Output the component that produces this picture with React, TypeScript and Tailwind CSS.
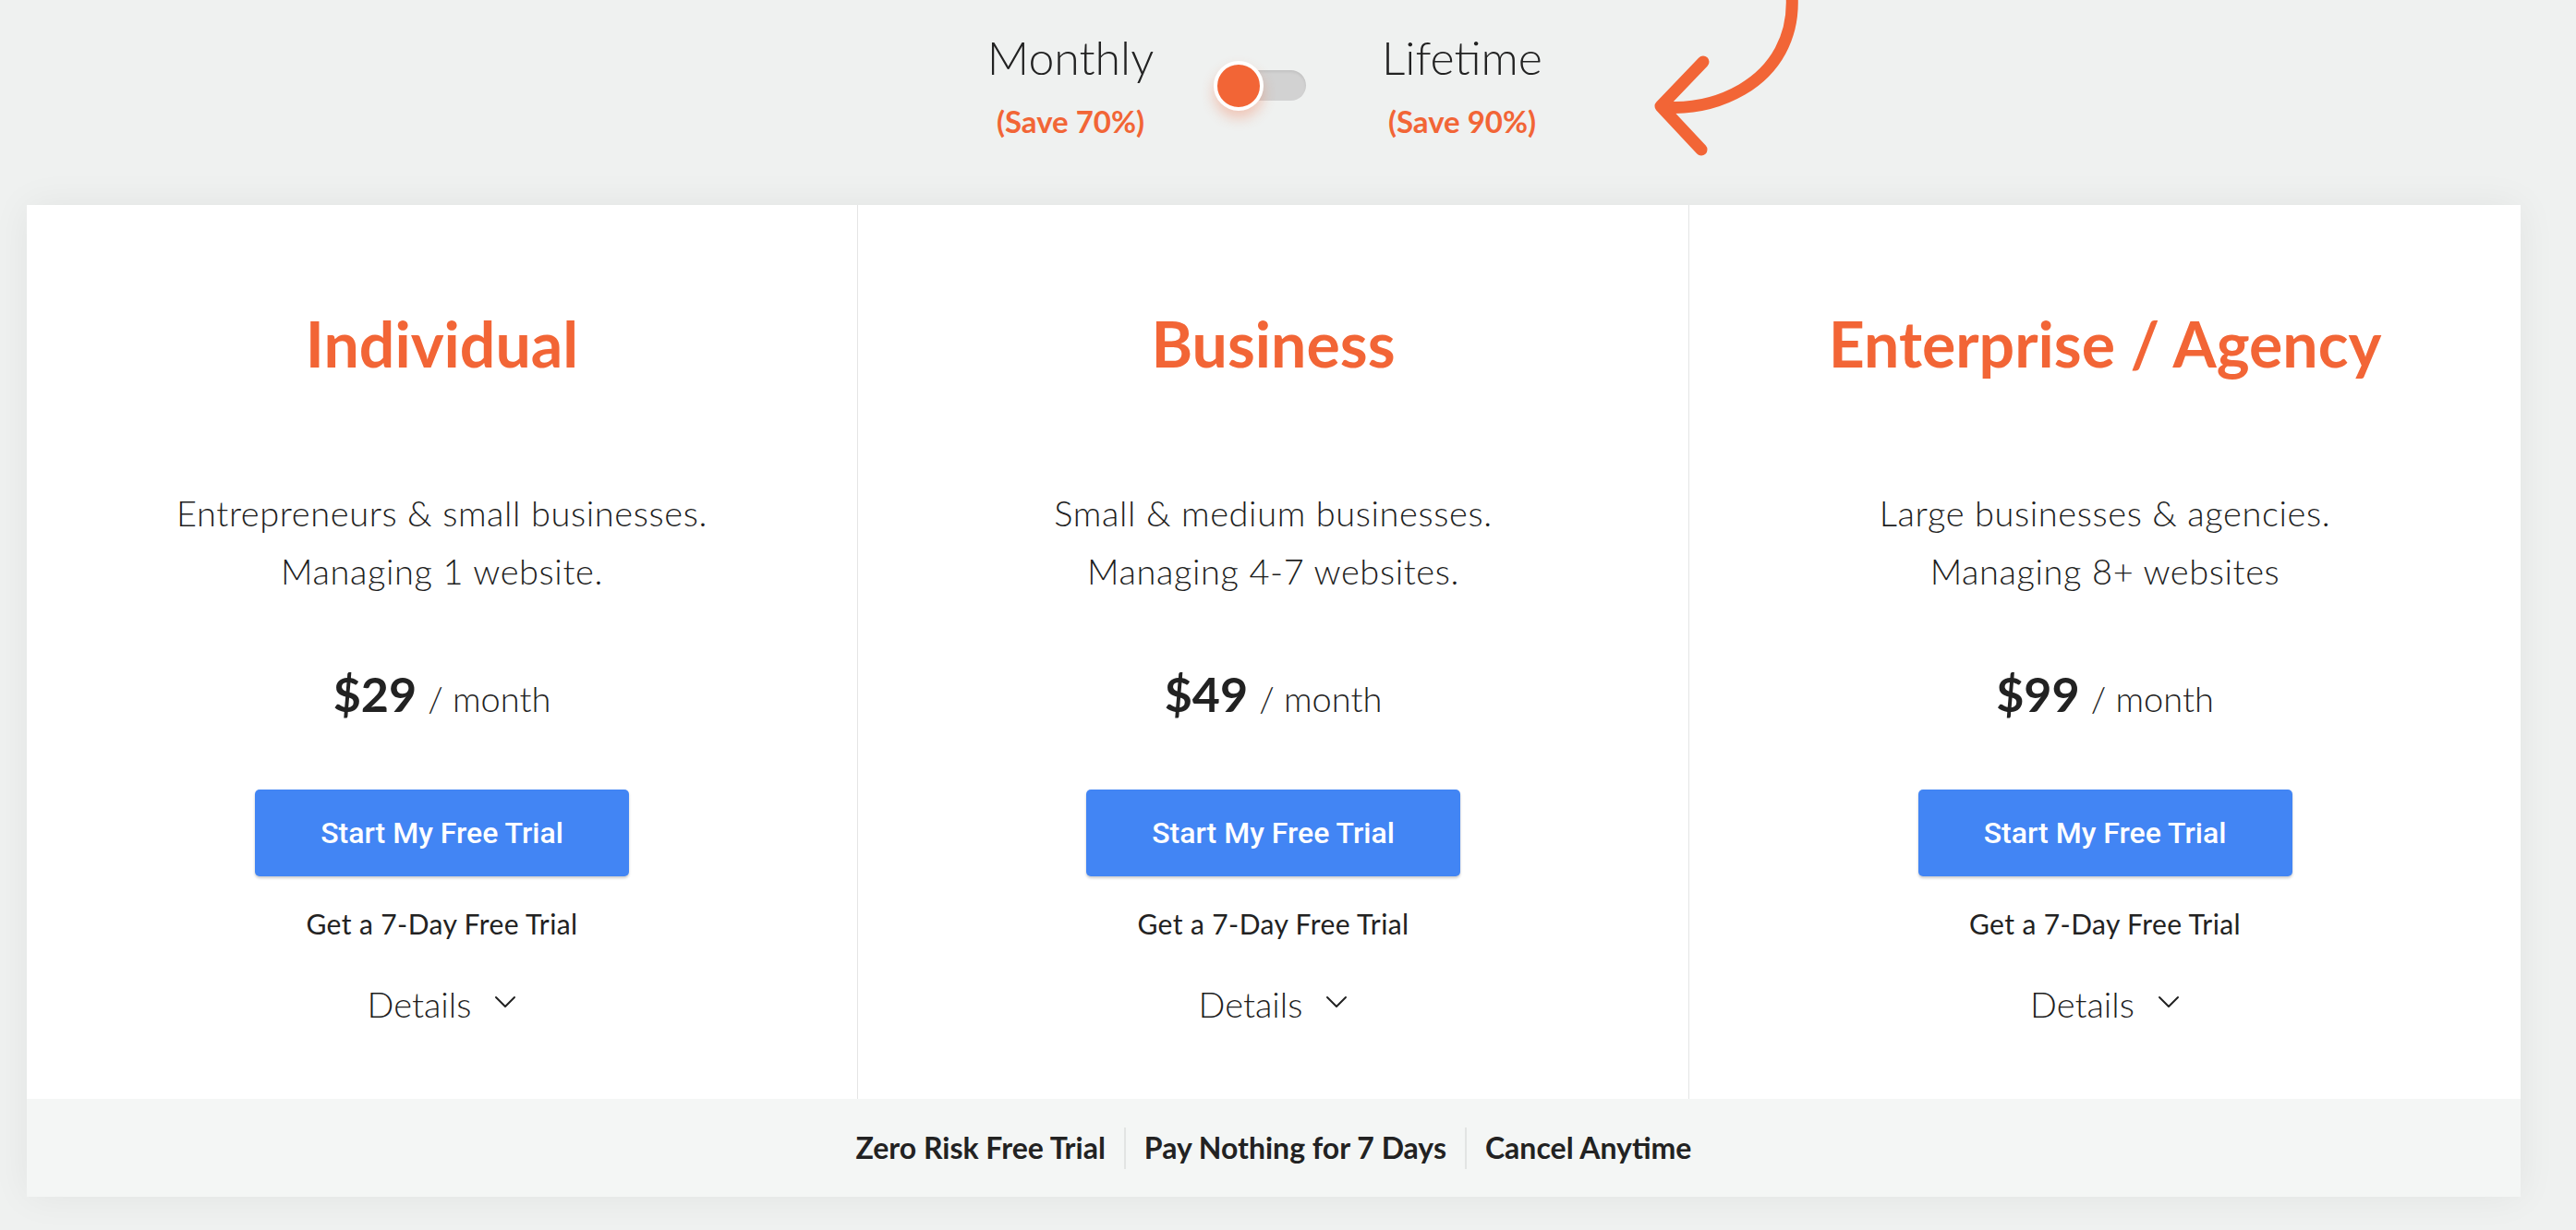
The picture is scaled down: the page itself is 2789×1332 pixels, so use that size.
import React from "react";

const plans = [
  { name: "Individual", d1: "Entrepreneurs & small businesses.", d2: "Managing 1 website.", price: "$29" },
  { name: "Business", d1: "Small & medium businesses.", d2: "Managing 4-7 websites.", price: "$49" },
  { name: "Enterprise / Agency", d1: "Large businesses & agencies.", d2: "Managing 8+ websites", price: "$99" },
];

function Arrow() {
  return (
    <svg
      className="absolute left-[1760px] top-0"
      width="220"
      height="180"
      viewBox="0 0 220 180"
      fill="none"
    >
      <path
        d="M180 -6 C183 40 162 76 126 97 C100 112 70 118 42 116"
        stroke="#f26536"
        strokeWidth="13"
        strokeLinecap="round"
      />
      <path
        d="M84 67 L38 115 L82 162"
        stroke="#f26536"
        strokeWidth="13"
        strokeLinecap="round"
        strokeLinejoin="round"
      />
    </svg>
  );
}

function Chevron() {
  return (
    <svg width="24" height="14" viewBox="0 0 24 14" fill="none" className="ml-[25px] mb-[4px]">
      <path d="M2 2 L12 12 L22 2" stroke="#222" strokeWidth="2" strokeLinecap="round" strokeLinejoin="round" />
    </svg>
  );
}

function Column({ plan, last }: { plan: (typeof plans)[number]; last: boolean }) {
  return (
    <div
      className={
        "flex flex-col items-center pt-[110px] pb-[78px] " + (last ? "" : "border-r border-[#e4e5e5]")
      }
    >
      <div className="text-[68px] leading-[80px] font-bold text-[#f26536] whitespace-nowrap">{plan.name}</div>
      <div className="mt-[112px] text-[38px] leading-[63px] font-light tracking-[0.6px] text-center text-[#1e1e1e]">
        <div>{plan.d1}</div>
        <div>{plan.d2}</div>
      </div>
      <div className="mt-[71px] flex items-baseline text-[#222]">
        <span className="text-[52px] leading-[60px] font-bold">{plan.price}</span>
        <span className="ml-[12px] text-[38px] leading-[60px] font-light">/ month</span>
      </div>
      <button className="mt-[69px] w-[405px] h-[94px] rounded-[5px] bg-[#4285f4] text-white font-[Roboto,sans-serif] font-medium text-[32px] shadow-[0_2px_3px_rgba(0,0,0,0.2)]">
        Start My Free Trial
      </button>
      <div className="mt-[31px] text-[30px] leading-[40px] tracking-[0.4px] text-[#222]">Get a 7-Day Free Trial</div>
      <div className="mt-[42px] flex items-center text-[38px] leading-[50px] font-light text-[#1e1e1e]">
        <span>Details</span>
        <Chevron />
      </div>
    </div>
  );
}

export default function App() {
  return (
    <div className="relative min-h-[1332px] w-full bg-[#eff1f0] font-[Lato,sans-serif] text-[#222]">
      <Arrow />
      <div className="pl-[29px] pt-[32px] pb-[35px]">
        <div className="w-[2700px]">
          <div className="flex justify-center pr-[16px]">
            <div className="w-[200px] flex flex-col items-center">
              <div className="text-[50px] leading-[60px] font-light">Monthly</div>
              <div className="mt-[19px] text-[33px] leading-[40px] font-bold text-[#f26536]">(Save 70%)</div>
            </div>
            <div className="ml-[55px] mt-[34px] relative w-[100px] h-[54px]">
              <div className="absolute left-[10px] top-[10px] w-[90px] h-[33px] rounded-full bg-[#d2d2d2] shadow-[inset_0_2px_3px_rgba(0,0,0,0.08)]" />
              <div className="absolute left-0 top-0 w-[54px] h-[54px] rounded-full bg-[#f26536] border-[4px] border-white shadow-[0_8px_14px_rgba(242,101,54,0.3)]" />
            </div>
            <div className="ml-[69px] w-[200px] flex flex-col items-center">
              <div className="text-[50px] leading-[60px] font-light">Lifetime</div>
              <div className="mt-[19px] text-[33px] leading-[40px] font-bold text-[#f26536]">(Save 90%)</div>
            </div>
          </div>

          <div className="mt-[71px] bg-white shadow-[0_0_40px_rgba(0,0,0,0.06)]">
            <div className="grid grid-cols-3">
              {plans.map((p, i) => (
                <Column key={p.name} plan={p} last={i === plans.length - 1} />
              ))}
            </div>
            <div className="h-[106px] bg-[#f4f6f5] flex items-center justify-center text-[32px] font-bold text-[#222]">
              <span>Zero Risk Free Trial</span>
              <span className="mx-[20px] w-[2px] h-[45px] bg-[#e2e4e3]" />
              <span>Pay Nothing for 7 Days</span>
              <span className="mx-[20px] w-[2px] h-[45px] bg-[#e2e4e3]" />
              <span>Cancel Anytime</span>
            </div>
          </div>
        </div>
      </div>
    </div>
  );
}
